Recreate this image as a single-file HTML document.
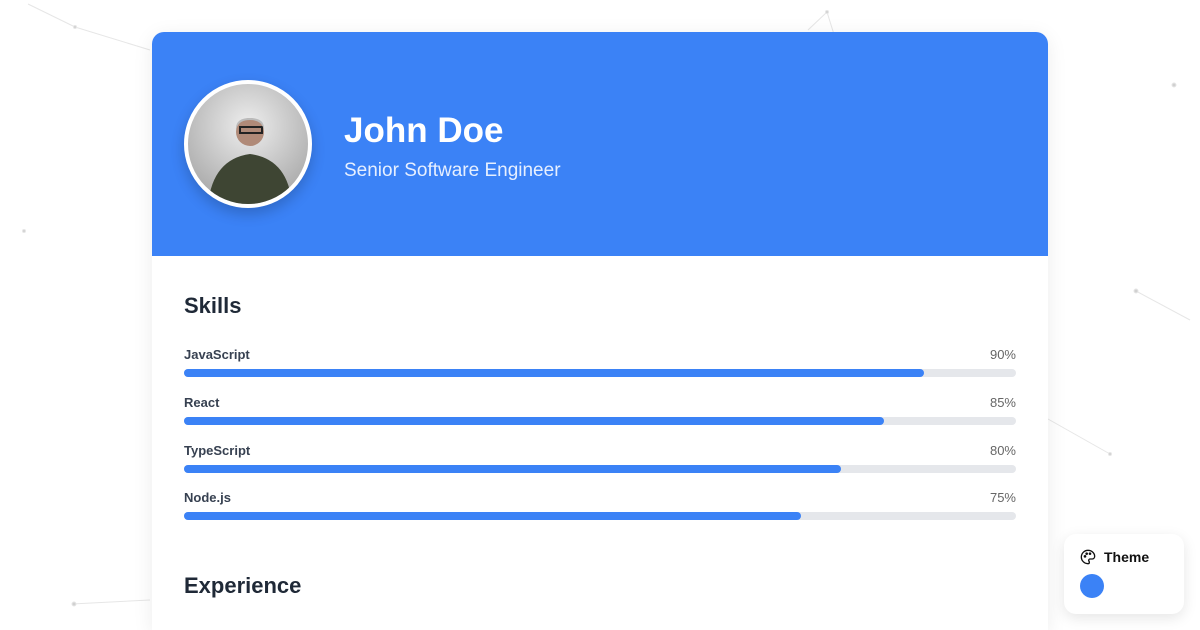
<!DOCTYPE html>
<html><head><meta charset="utf-8"><style>
*{margin:0;padding:0;box-sizing:border-box}
html,body{width:1200px;height:630px;overflow:hidden}
body{background:#fff;font-family:"Liberation Sans",sans-serif;position:relative}
.bg{position:absolute;left:0;top:0}
.card{position:absolute;left:152px;top:32px;width:896px;height:598px;background:#fff;border-radius:12px 12px 0 0;overflow:hidden;box-shadow:0 4px 20px rgba(0,0,0,.08)}
.hdr{height:224px;background:#3b82f6;position:relative}
.av{position:absolute;left:32px;top:48px;width:128px;height:128px;border-radius:50%;border:4px solid #fff;background:radial-gradient(circle at 50% 35%,#eee,#999);overflow:hidden;box-shadow:0 6px 14px rgba(0,0,0,.2)}
.name{position:absolute;left:192px;top:79px;color:#fff;font-size:35px;font-weight:bold}
.sub{position:absolute;left:192px;top:128px;color:#e6efff;font-size:19px}
h2{position:absolute;left:32px;font-size:22px;font-weight:bold;color:#1f2937}
.sk{position:absolute;left:32px;width:832px}
.sk .l{font-size:13px;color:#333;display:flex;justify-content:space-between;height:18px}
.sk .l span:first-child{font-weight:600;color:#374151}
.sk .l span:last-child{color:#666}
.tr{margin-top:4px;height:8px;background:#e5e7eb;border-radius:4px}
.tr div{height:8px;background:#3b82f6;border-radius:4px}
.theme{position:absolute;left:1064px;top:534px;width:120px;height:80px;background:#fff;border-radius:12px;box-shadow:0 4px 14px rgba(0,0,0,.1)}
</style></head><body>
<svg class="bg" width="1200" height="630" stroke="#e6e6e6" fill="#d0d0d0" stroke-width="1">
<line x1="28" y1="4" x2="75" y2="27"/><line x1="75" y1="27" x2="150" y2="50"/><line x1="808" y1="30" x2="827" y2="12"/><line x1="827" y1="12" x2="842" y2="60"/>
<line x1="914" y1="310" x2="1030" y2="350"/><line x1="1136" y1="291" x2="1190" y2="320"/><line x1="1030" y1="350" x2="1032" y2="410"/><line x1="1032" y1="410" x2="1110" y2="454"/>
<line x1="690" y1="483" x2="735" y2="600"/><line x1="728" y1="535" x2="767" y2="572"/><line x1="767" y1="572" x2="875" y2="522"/><line x1="875" y1="522" x2="917" y2="499"/><line x1="917" y1="499" x2="925" y2="517"/><line x1="755" y1="433" x2="735" y2="520"/>
<line x1="72" y1="604" x2="150" y2="600"/><line x1="168" y1="480" x2="174" y2="600"/><line x1="840" y1="256" x2="914" y2="310"/><line x1="940" y1="256" x2="914" y2="310"/>
<circle cx="75" cy="27" r="1.5"/><circle cx="827" cy="12" r="1.5"/><circle cx="1174" cy="85" r="2"/><circle cx="24" cy="231" r="1.5"/><circle cx="1136" cy="291" r="2"/><circle cx="914" cy="310" r="2"/><circle cx="1032" cy="410" r="2"/><circle cx="1110" cy="454" r="1.5"/><circle cx="728" cy="535" r="2"/><circle cx="767" cy="572" r="1.5"/><circle cx="875" cy="522" r="2"/><circle cx="735" cy="600" r="2"/><circle cx="74" cy="604" r="2"/><circle cx="260" cy="297" r="1.5"/><circle cx="598" cy="365" r="1.5"/><circle cx="293" cy="440" r="1.5"/><circle cx="755" cy="433" r="1.5"/><circle cx="690" cy="483" r="1.5"/>
</svg>
<div class="card">
<div class="hdr">
<div class="av"><svg width="120" height="120"><circle cx="62" cy="48" r="14" fill="#b08a78"/><rect x="52" y="43" width="22" height="6" fill="none" stroke="#222" stroke-width="2"/><path d="M62 34 q-15 0 -14 12 q2-10 14-10 q12 0 14 10 q1-12-14-12z" fill="#bbb"/><path d="M20 120 q5-45 42-50 q38 5 42 50z" fill="#3e4533"/></svg></div>
<div class="name">John Doe</div>
<div class="sub">Senior Software Engineer</div>
</div>
<h2 style="top:261px">Skills</h2>
<div class="sk" style="top:315px"><div class="l"><span>JavaScript</span><span>90%</span></div><div class="tr"><div style="width:89%"></div></div></div>
<div class="sk" style="top:363px"><div class="l"><span>React</span><span>85%</span></div><div class="tr"><div style="width:84.1%"></div></div></div>
<div class="sk" style="top:411px"><div class="l"><span>TypeScript</span><span>80%</span></div><div class="tr"><div style="width:79%"></div></div></div>
<div class="sk" style="top:458px"><div class="l"><span>Node.js</span><span>75%</span></div><div class="tr"><div style="width:74.1%"></div></div></div>
<h2 style="top:541px">Experience</h2>
</div>
<div class="theme">
<svg style="position:absolute;left:16px;top:15px" width="16" height="16" viewBox="0 0 24 24" fill="none" stroke="#111" stroke-width="2"><path d="M12 2a10 10 0 0 0 0 20c1.5 0 2-1 2-2 0-1.5-1-2-1-3s1-2 2-2h3a4 4 0 0 0 4-4c0-5-4.5-9-10-9z"/><circle cx="7.5" cy="11" r="1" fill="#111"/><circle cx="10" cy="7" r="1" fill="#111"/><circle cx="15" cy="7" r="1" fill="#111"/></svg>
<div style="position:absolute;left:40px;top:15px;font-size:14px;font-weight:bold;color:#111">Theme</div>
<div style="position:absolute;left:16px;top:40px;width:24px;height:24px;border-radius:50%;background:#3b82f6"></div>
</div>
</body></html>
